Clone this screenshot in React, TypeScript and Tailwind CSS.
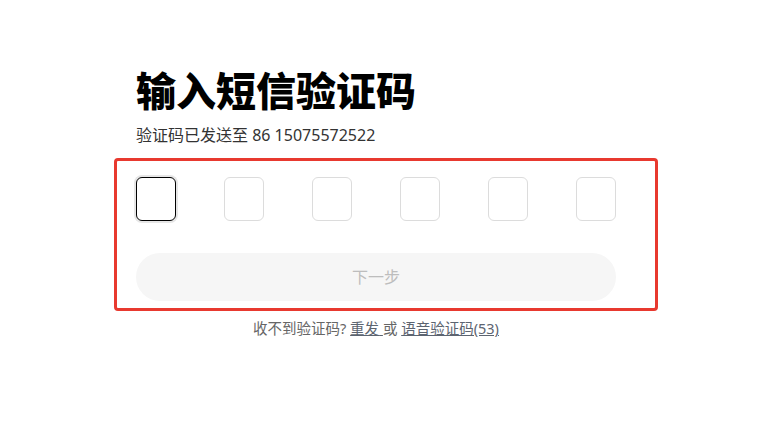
import { useState } from "react";

const FONT = "font-['Noto_Sans','Noto_Sans_CJK_SC',sans-serif]";

function CodeBox({ active }: { active: boolean }) {
  return (
    <input
      type="text"
      maxLength={1}
      className={
        active
          ? "w-[40px] h-[44px] rounded-[6px] border border-black bg-white text-center text-xl outline-none shadow-[0_0_0_2px_#e6e6e6]"
          : "w-[40px] h-[44px] rounded-[6px] border border-[#dcdcdc] bg-white text-center text-xl outline-none"
      }
    />
  );
}

export default function App() {
  const [focus] = useState(0);
  return (
    <div className={`min-h-screen bg-white pt-[67px] pl-[136px] ${FONT}`}>
      <div className="w-[480px]">
        <h1 className="text-[40px] leading-[48px] font-black text-black">输入短信验证码</h1>
        <p className="mt-2 text-[16px] leading-6 text-[#333]">验证码已发送至 86 15075572522</p>

        <div className="mt-[11px] -ml-[22px] w-[544px] rounded-[4px] border-[3px] border-[#e8392f] pl-[19px] pr-[39px] pt-4 pb-[7px]">
          <div className="flex justify-between">
            {[0, 1, 2, 3, 4, 5].map((i) => (
              <CodeBox key={i} active={i === focus} />
            ))}
          </div>
          <button
            type="button"
            disabled
            className="mt-8 w-full h-12 rounded-full bg-[#f6f6f6] text-[16px] text-[#bdbdbd]"
          >
            下一步
          </button>
        </div>

        <p className="mt-[7px] text-center text-[14.5px] leading-5 text-[#666]">
          收不到验证码?{" "}
          <a href="#" className="underline text-[#5c6470]">
            重发{" "}
          </a>
          或{" "}
          <a href="#" className="underline text-[#5c6470]">
            语音验证码(53)
          </a>
        </p>
      </div>
    </div>
  );
}
